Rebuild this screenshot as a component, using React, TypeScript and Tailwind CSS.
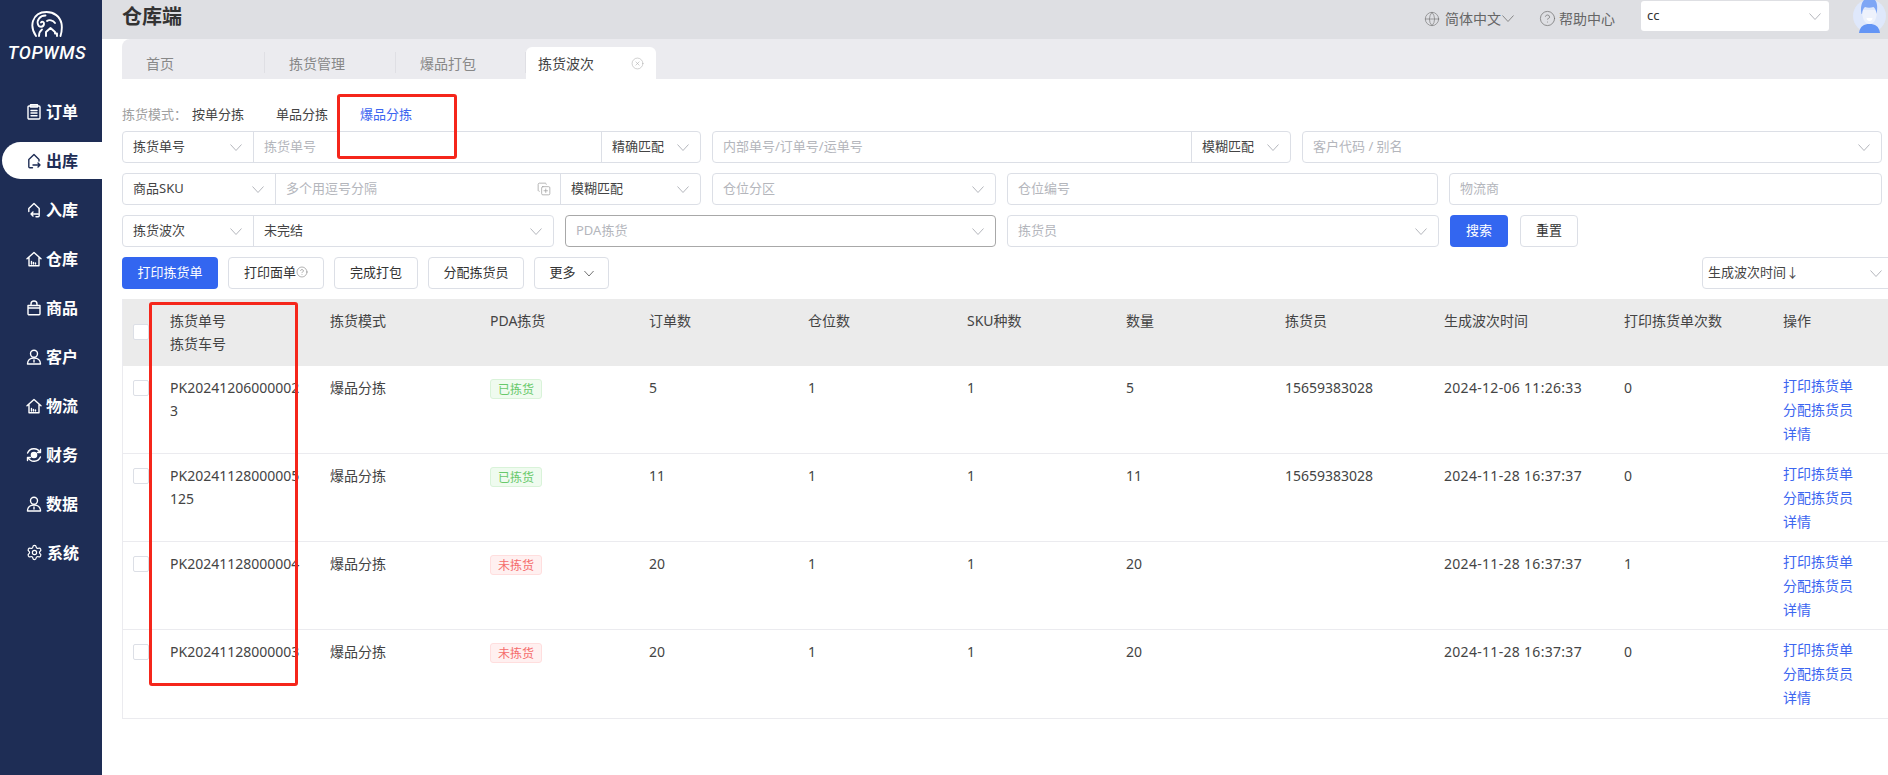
import React from 'react'
import { CircleHelp, CircleX, CopyPlus, Globe, Settings } from 'lucide-react'

type Order = {
  no: string
  done: boolean
  orders: number
  qty: number
  picker: string
  time: string
  prints: number
}

const orders: Order[] = [
  { no: 'PK202412060000023', done: true, orders: 5, qty: 5, picker: '15659383028', time: '2024-12-06 11:26:33', prints: 0 },
  { no: 'PK20241128000005125', done: true, orders: 11, qty: 11, picker: '15659383028', time: '2024-11-28 16:37:37', prints: 0 },
  { no: 'PK20241128000004', done: false, orders: 20, qty: 20, picker: '', time: '2024-11-28 16:37:37', prints: 1 },
  { no: 'PK20241128000003', done: false, orders: 20, qty: 20, picker: '', time: '2024-11-28 16:37:37', prints: 0 },
]

const cols = 'grid grid-cols-[37px_160px_160px_159px_159px_159px_159px_159px_159px_180px_159px_1fr]'

function Chevron({ className = 'text-[#b4b6bc]' }: { className?: string }) {
  return (
    <svg width="12" height="7" viewBox="0 0 12 7" fill="none" stroke="currentColor" strokeWidth="1" className={`shrink-0 ${className}`}>
      <path d="M.5.5 6 6.5 11.5.5" />
    </svg>
  )
}

function Logo() {
  return (
    <svg width="32" height="26" viewBox="0 0 32 26" fill="none" stroke="white" strokeWidth="1.9" strokeLinecap="round" strokeLinejoin="round">
      <path d="M5 25C1.5 20 .5 15 2 10 4 4 9 1 15.5 1 23 1 29 5.5 30.5 12.5c.7 4 .2 8.500-1 12.500" />
      <path d="M14.500 4.500C9 4.500 5.500 9 7 13.500c1 3 5.500 3 6-.5.3-2-2-3-3-1.500" />
      <path d="M8 25c0-3 1-5 3-6.500M16 10c2-1.500 6-1 8 2" />
      <path d="M15 25v-4l4.500-4 4.500 4v1.500h2V25" />
    </svg>
  )
}

function NavIcon({ name }: { name: string }) {
  if (name === '系统') return <Settings size={17} strokeWidth={1.7} className="shrink-0" />
  const paths: Record<string, React.ReactNode> = {
    订单: (
      <>
        <rect x="2" y="2" width="12" height="13" rx="1" />
        <path d="M4.500.8h7V3h-7zM5 6.500h6M5 9h6M5 11.800h6" />
      </>
    ),
    出库: <path d="M6.500 14.800H3.800a1 1 0 0 1-1-1V6.500L8 1.500l5 5v1.500M7 12h7M12 10l2 2-2 2" />,
    入库: <path d="M2.800 9.500v-3L8 1.500l5.200 5v7.300a1 1 0 0 1-1 1H10M12 12H5M7 10l-2 2 2 2" />,
    仓库: <path d="M1 7.800 8 1.500l7 6.300M3 6.500v8.300h10V6.500M5.500 13v-2.500M7.500 13v-1.500M9.500 13v-1" />,
    商品: <path d="M2 5.500h12v8.300a1 1 0 0 1-1 1H3a1 1 0 0 1-1-1zM5 5.500V4a3 3 0 0 1 6 0v1.500M2 8h12" />,
    客户: (
      <>
        <circle cx="8" cy="4.800" r="3.500" />
        <path d="M1.500 15c0-3.700 2.700-6 6.500-6s6.500 2.300 6.500 6zM8 11v2" />
      </>
    ),
    物流: <path d="M1 7.800 8 1.500l7 6.300M3 6.500v8.300h10V6.500M5.500 13v-2.500M7.500 13v-1.500M9.500 13v-1" />,
    财务: (
      <>
        <path d="M14 5.500A6.800 6.800 0 0 0 1.600 6M2 10.500a6.800 6.800 0 0 0 12.400-.5M14.500 2.500v3h-3M1.500 13.500v-3h3" />
        <circle cx="8" cy="8" r="2.600" fill="currentColor" />
      </>
    ),
    数据: (
      <>
        <circle cx="8" cy="4.800" r="3.500" />
        <path d="M1.500 15c0-3.700 2.700-6 6.500-6s6.500 2.300 6.500 6zM8 11v2" />
      </>
    ),
  }
  return (
    <svg width="16" height="16" viewBox="0 0 16 16" fill="none" stroke="currentColor" strokeWidth="1.400" strokeLinecap="round" strokeLinejoin="round" className="shrink-0">
      {paths[name]}
    </svg>
  )
}

function Sidebar() {
  const items = ['订单', '出库', '入库', '仓库', '商品', '客户', '物流', '财务', '数据', '系统']
  return (
    <aside className="w-[102px] shrink-0 bg-[#1e2d55] text-white">
      <div className="flex h-[93px] flex-col items-center pt-[11px] pr-[8px]">
        <Logo />
        <div className="mt-[7px] font-['Roboto',sans-serif] text-[18px] leading-[18px] font-medium tracking-[0.6px] italic">TOPWMS</div>
      </div>
      <nav className="flex flex-col gap-[12px] pl-[2px]">
        {items.map((item) => (
          <div
            key={item}
            className={`flex h-[37px] items-center gap-[4px] rounded-l-full pl-[24px] text-[16px] font-bold ${item === '出库' ? 'bg-white text-[#1e2d55]' : ''}`}
          >
            <NavIcon name={item} />
            <span>{item}</span>
          </div>
        ))}
      </nav>
    </aside>
  )
}

function Avatar() {
  return (
    <svg width="33" height="33" viewBox="0 0 33 33" className="shrink-0">
      <circle cx="16.500" cy="16" r="16.500" fill="#dfe8fb" />
      <path d="M6 33c1-7 5-9 10.500-9S26 26 27 33z" fill="#6495f5" />
      <path d="M9 10c0 9 3 14 7.500 14S24 19 24 10z" fill="#eef2fc" />
      <path d="M8.500 14C7 7 9 2 11 0h11c2 2 3 7 1.500 14-.5-4-1.500-6-3-7-3 1-6 1-8.500 0-1.500 1-2.500 3-3 7z" fill="#7ea6f5" />
      <path d="M13.500 18h6c0 2-1.500 3-3 3s-3-1-3-3z" fill="#fff" />
    </svg>
  )
}

function TopBar() {
  return (
    <header className="flex h-[39px] items-start bg-[#dedfe3] pr-[2px] pl-[20px] text-[14px] text-[#666]">
      <h1 className="pt-[3px] text-[20px] leading-[28px] font-semibold text-[#333]">仓库端</h1>
      <div className="mt-[8px] ml-auto flex items-center">
        <Globe size={16} strokeWidth={1} className="text-[#777]" />
        <span className="ml-[5px]">简体中文</span>
        <Chevron className="ml-[1px] text-[#888]" />
        <CircleHelp size={17} strokeWidth={1.100} className="ml-[25px] text-[#777]" />
        <span className="ml-[3px]">帮助中心</span>
      </div>
      <div className="mt-px ml-[26px] flex h-[30px] w-[188px] items-center justify-between rounded-[3px] bg-white pr-[8px] pl-[6px] text-[13px] text-[#333]">
        cc
        <Chevron />
      </div>
      <div className="ml-[24px]">
        <Avatar />
      </div>
    </header>
  )
}

function Tabs() {
  const tabs = [
    { label: '首页', w: 'w-[143px] pl-[24px]' },
    { label: '拣货管理', w: 'w-[131px] pl-[24px]' },
    { label: '爆品打包', w: 'w-[130px] pl-[24px]' },
  ]
  return (
    <div className="ml-[20px] flex h-[40px] items-end rounded-tl-lg bg-[#ebebef] text-[14px]">
      {tabs.map((t) => (
        <div key={t.label} className={`relative flex h-[32px] items-center text-[#888] ${t.w}`}>
          {t.label}
          <span className="absolute top-[5px] right-0 h-[21px] w-px bg-[#dfdfe4]" />
        </div>
      ))}
      <div className="flex h-[32px] w-[130px] items-center justify-between rounded-t-[6px] bg-white pr-[12px] pl-[12px] text-[#444]">
        拣货波次
        <CircleX size={13} strokeWidth={1} className="text-[#aaa]" />
      </div>
    </div>
  )
}

function Select({ text, placeholder, className = '' }: { text?: string; placeholder?: string; className?: string }) {
  return (
    <div className={`flex h-full items-center justify-between pr-[11px] pl-[10px] ${className}`}>
      <span className={text ? 'text-[#444]' : 'text-[#b4b6bc]'}>{text ?? placeholder}</span>
      <Chevron />
    </div>
  )
}

const box = 'h-[32px] rounded-[4px] border border-[#dcdfe6] bg-white'

function Filters() {
  return (
    <div className="flex flex-col gap-[10px] text-[13px]">
      <div className="flex gap-[11px]">
        <div className={`flex w-[579px] divide-x divide-[#dcdfe6] ${box}`}>
          <Select text="拣货单号" className="w-[131px]" />
          <div className="flex flex-1 items-center pl-[10px] text-[#b4b6bc]">拣货单号</div>
          <Select text="精确匹配" className="w-[98px]" />
        </div>
        <div className={`flex w-[579px] divide-x divide-[#dcdfe6] ${box}`}>
          <div className="flex flex-1 items-center pl-[10px] text-[#b4b6bc]">内部单号/订单号/运单号</div>
          <Select text="模糊匹配" className="w-[98px]" />
        </div>
        <div className={`flex-1 ${box}`}>
          <Select placeholder="客户代码 / 别名" />
        </div>
      </div>
      <div className="flex gap-[11px]">
        <div className={`flex w-[579px] divide-x divide-[#dcdfe6] ${box}`}>
          <Select text="商品SKU" className="w-[153px]" />
          <div className="flex flex-1 items-center justify-between pr-[9px] pl-[10px] text-[#b4b6bc]">
            多个用逗号分隔
            <CopyPlus size={14} strokeWidth={1.200} className="text-[#999]" />
          </div>
          <Select text="模糊匹配" className="w-[139px]" />
        </div>
        <div className={`w-[284px] ${box}`}>
          <Select placeholder="仓位分区" />
        </div>
        <div className={`flex w-[431px] items-center pl-[10px] text-[#b4b6bc] ${box}`}>仓位编号</div>
        <div className={`flex flex-1 items-center pl-[10px] text-[#b4b6bc] ${box}`}>物流商</div>
      </div>
      <div className="flex gap-[11px]">
        <div className={`flex w-[432px] divide-x divide-[#dcdfe6] ${box}`}>
          <Select text="拣货波次" className="w-[131px]" />
          <Select text="未完结" className="flex-1" />
        </div>
        <div className="h-[32px] w-[431px] rounded-[4px] border border-[#a8a8a8] bg-white">
          <Select placeholder="PDA拣货" />
        </div>
        <div className={`w-[432px] ${box}`}>
          <Select placeholder="拣货员" />
        </div>
        <button className="h-[32px] w-[58px] rounded-[4px] bg-[#3366f0] text-white">搜索</button>
        <button className={`ml-px w-[58px] text-[#333] ${box}`}>重置</button>
      </div>
      <div className="flex items-center gap-[10px]">
        <button className="h-[32px] w-[96px] rounded-[4px] bg-[#3366f0] text-white">打印拣货单</button>
        <button className={`flex w-[96px] items-center justify-center text-[#333] ${box}`}>
          打印面单
          <CircleHelp size={12} strokeWidth={1} className="mb-[3px] text-[#666]" />
        </button>
        <button className={`w-[84px] text-[#333] ${box}`}>完成打包</button>
        <button className={`w-[96px] text-[#333] ${box}`}>分配拣货员</button>
        <button className={`flex w-[75px] items-center justify-center gap-[8px] text-[#333] ${box}`}>
          更多
          <Chevron className="w-[10px] text-[#555]" />
        </button>
        <div className={`-mr-[20px] ml-auto w-[200px] ${box}`}>
          <div className="flex h-full items-center justify-between pr-[19px] pl-[5px] text-[#444]">
            生成波次时间↓
            <Chevron />
          </div>
        </div>
      </div>
    </div>
  )
}

function Badge({ done }: { done: boolean }) {
  return (
    <span
      className={`flex h-[20px] w-[52px] items-center justify-center rounded-[3px] border text-[12px] ${
        done ? 'border-[#d9f3d9] bg-[#effbef] text-[#68c96b]' : 'border-[#ffdede] bg-[#fff0f0] text-[#f56c6c]'
      }`}
    >
      {done ? '已拣货' : '未拣货'}
    </span>
  )
}

function Check() {
  return <span className="block h-[16px] w-[16px] rounded-[2px] border border-[#dcdfe6] bg-white" />
}

function PickTable() {
  const heads = ['拣货模式', 'PDA拣货', '订单数', '仓位数', 'SKU种数', '数量', '拣货员', '生成波次时间', '打印拣货单次数', '操作']
  return (
    <div className="relative mt-[10px] -mr-[6px] border-b border-l border-[#ebebef] text-[14px] leading-[23px] text-[#444]">
      <div className={`${cols} h-[67px] bg-[#ebebeb] pt-[10px]`}>
        <div className="pt-[15px] pl-[10px]">
          <Check />
        </div>
        <div className="pl-[10px]">
          拣货单号
          <br />
          拣货车号
        </div>
        {heads.map((h) => (
          <div key={h} className="pl-[10px]">
            {h}
          </div>
        ))}
      </div>
      {orders.map((o, i) => (
        <div key={o.no} className={`${cols} h-[88px] pt-[10px] ${i < orders.length - 1 ? 'border-b border-[#ebebef]' : ''}`}>
          <div className="pt-[4px] pl-[10px]">
            <Check />
          </div>
          <div className="pr-[14px] pl-[10px] break-all">{o.no}</div>
          <div className="pl-[10px]">爆品分拣</div>
          <div className="pt-[3px] pl-[10px]">
            <Badge done={o.done} />
          </div>
          <div className="pl-[10px]">{o.orders}</div>
          <div className="pl-[10px]">1</div>
          <div className="pl-[10px]">1</div>
          <div className="pl-[10px]">{o.qty}</div>
          <div className="pl-[10px]">{o.picker}</div>
          <div className="pl-[10px] tracking-[0.3px]">{o.time}</div>
          <div className="pl-[10px]">{o.prints}</div>
          <div className="-mt-[2px] flex flex-col pl-[10px] leading-[24px] text-[#3c66f0]">
            <span>打印拣货单</span>
            <span>分配拣货员</span>
            <span>详情</span>
          </div>
          <div />
        </div>
      ))}
      <div className="absolute top-[3px] left-[26px] h-[384px] w-[149px] rounded-[3px] border-[3px] border-[#f5261b]" />
    </div>
  )
}

export default function App() {
  return (
    <div className="flex h-screen w-full overflow-hidden bg-white font-['Noto_Sans','Noto_Sans_CJK_SC',sans-serif] text-[#333]">
      <Sidebar />
      <main className="min-w-0 flex-1">
        <TopBar />
        <Tabs />
        <section className="relative pt-[27px] pr-[6px] pl-[20px]">
          <div className="mb-[7px] flex h-[18px] items-center text-[13px]">
            <span className="w-[70px] text-[#a0a0a0]">拣货模式：</span>
            <span className="w-[84px] text-[#444]">按单分拣</span>
            <span className="w-[84px] text-[#444]">单品分拣</span>
            <span className="text-[#3c66f0]">爆品分拣</span>
          </div>
          <div className="absolute top-[15px] left-[235px] h-[65px] w-[120px] rounded-[3px] border-[3px] border-[#f5261b]" />
          <Filters />
          <PickTable />
        </section>
      </main>
    </div>
  )
}
